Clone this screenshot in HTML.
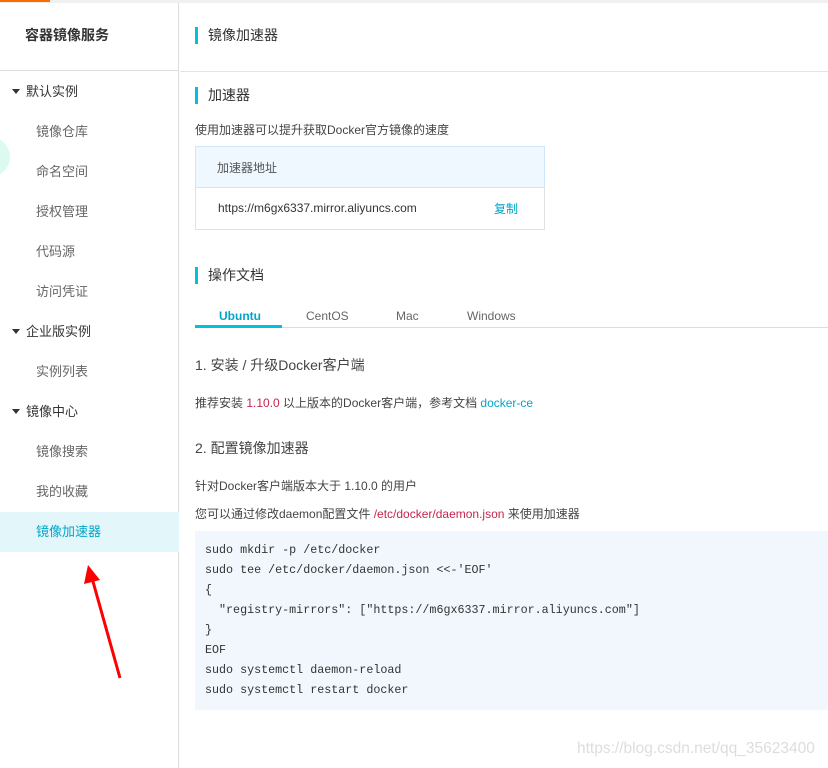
<!DOCTYPE html>
<html><head><meta charset="utf-8"><style>
*{margin:0;padding:0;box-sizing:border-box}
body{width:828px;height:768px;overflow:hidden;background:#fff;font-family:"Liberation Sans","Noto Sans CJK SC",sans-serif;font-size:12px;color:#333;position:relative}
.topbar{position:absolute;left:0;top:0;width:828px;height:3px;background:#f0f0f0}
.orange{position:absolute;left:0;top:0;width:50px;height:2px;background:#ff6a00}
.side{position:absolute;left:0;top:3px;width:179px;height:765px;border-right:1px solid #ddd}
.side .title{height:68px;border-bottom:1px solid #ddd;font-size:14px;font-weight:bold;color:#333;padding:22px 0 0 25px}
.side .grp{position:absolute;left:12px;font-size:13px;color:#333}
.side .grp:before{content:"";display:inline-block;border-left:4px solid transparent;border-right:4px solid transparent;border-top:5px solid #333;margin-right:6px;vertical-align:2px}
.side .it{position:absolute;left:36px;font-size:13px;color:#666}
.act{position:absolute;left:0;top:509px;width:179px;height:40px;background:#e3f7fa}
.circle{position:absolute;left:-30px;top:134px;width:40px;height:40px;border-radius:50%;background:#dcfaf0}
.h{position:absolute;font-size:14px;color:#333;padding-left:10px;border-left:3px solid #00c1de;line-height:17px}
.t{position:absolute;font-size:12px;color:#444;white-space:nowrap}
pre{font-family:"Liberation Mono","Noto Sans CJK SC",monospace;font-size:11.7px;color:#333;line-height:20px}
</style></head><body>
<div class="topbar"></div><div class="orange"></div>
<div class="side">
<div class="title">容器镜像服务</div>
<div class="circle"></div>
<div class="act"></div>
<div class="grp" style="top:78px">默认实例</div>
<div class="it" style="top:118px">镜像仓库</div>
<div class="it" style="top:158px">命名空间</div>
<div class="it" style="top:198px">授权管理</div>
<div class="it" style="top:238px">代码源</div>
<div class="it" style="top:278px">访问凭证</div>
<div class="grp" style="top:318px">企业版实例</div>
<div class="it" style="top:358px">实例列表</div>
<div class="grp" style="top:398px">镜像中心</div>
<div class="it" style="top:438px">镜像搜索</div>
<div class="it" style="top:478px">我的收藏</div>
<div class="it" style="top:518px;color:#00a6c9">镜像加速器</div>
</div>
<svg style="position:absolute;left:80px;top:560px" width="50" height="125"><line x1="40" y1="118" x2="12" y2="18" stroke="#f00" stroke-width="3"/><polygon points="8,5 4,24 20,20" fill="#f00"/></svg>
<div style="position:absolute;left:180px;top:71px;width:648px;border-top:1px solid #e5e5e5"></div>
<div class="h" style="left:195px;top:27px">镜像加速器</div>
<div class="h" style="left:195px;top:87px">加速器</div>
<div class="t" style="left:195px;top:121px">使用加速器可以提升获取Docker官方镜像的速度</div>
<div style="position:absolute;left:195px;top:146px;width:350px;height:84px;border:1px solid #e2e2e2">
<div style="height:42px;background:#eff7ff;border:1px solid #cfe6fb;margin:-1px;padding:12px 0 0 21px;font-size:12px;color:#555">加速器地址</div>
<div class="t" style="left:22px;top:54px;color:#333">https://m6gx6337.mirror.aliyuncs.com</div>
<div class="t" style="left:298px;top:53px;color:#00a6c9">复制</div>
</div>
<div class="h" style="left:195px;top:267px">操作文档</div>
<div style="position:absolute;left:195px;top:327px;width:633px;border-top:1px solid #ddd"></div>
<div style="position:absolute;left:195px;top:325px;width:87px;height:3px;background:#00c1de"></div>
<div class="t" style="left:219px;top:309px;color:#00a6c9;font-weight:bold">Ubuntu</div>
<div class="t" style="left:306px;top:309px;color:#666">CentOS</div>
<div class="t" style="left:396px;top:309px;color:#666">Mac</div>
<div class="t" style="left:467px;top:309px;color:#666">Windows</div>
<div class="t" style="left:195px;top:355px;font-size:14px">1. 安装 / 升级Docker客户端</div>
<div class="t" style="left:195px;top:394px">推荐安装 <span style="color:#c7254e">1.10.0</span> 以上版本的Docker客户端，参考文档 <span style="color:#00a6c9">docker-ce</span></div>
<div class="t" style="left:195px;top:438px;font-size:14px">2. 配置镜像加速器</div>
<div class="t" style="left:195px;top:477px">针对Docker客户端版本大于 1.10.0 的用户</div>
<div class="t" style="left:195px;top:505px">您可以通过修改daemon配置文件 <span style="color:#c7254e">/etc/docker/daemon.json</span> 来使用加速器</div>
<div style="position:absolute;left:195px;top:531px;width:633px;height:179px;background:#f1f7fd;padding:9px 0 0 10px">
<pre>sudo mkdir -p /etc/docker
sudo tee /etc/docker/daemon.json &lt;&lt;-'EOF'
{
  "registry-mirrors": ["https://m6gx6337.mirror.aliyuncs.com"]
}
EOF
sudo systemctl daemon-reload
sudo systemctl restart docker</pre>
</div>
<div class="t" style="left:577px;top:740px;font-size:15.5px;color:#ddd">https://blog.csdn.net/qq_35623400</div>
</body></html>
